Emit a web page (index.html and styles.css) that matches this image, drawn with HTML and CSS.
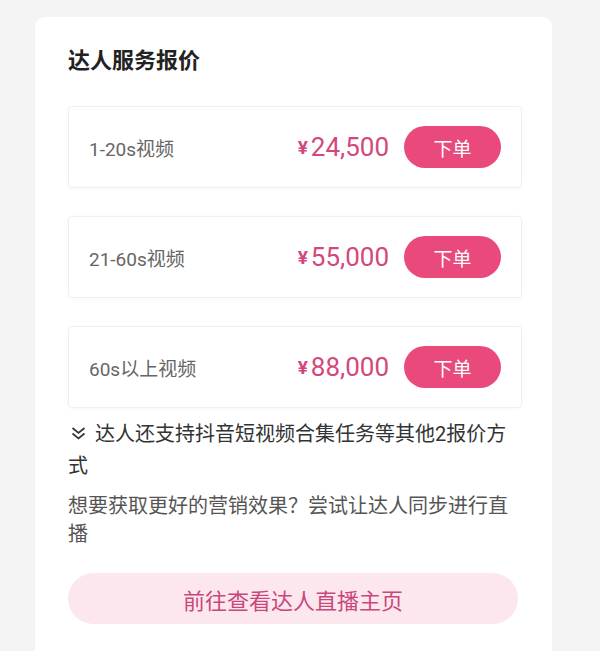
FILE: index.html
```html
<!DOCTYPE html>
<html lang="zh-CN">
    <head>
        <meta charset="UTF-8" />
        <meta name="viewport" content="width=device-width, initial-scale=1.0" />
        <title>达人服务报价</title>
        <link rel="stylesheet" href="styles.css">
    </head>
    <body>
        <div class="card">
            <h2 class="card-title">达人服务报价</h2>

            <div class="price-list">
                <div class="price-row">
                    <span class="price-label">1-20s视频</span>
                    <span class="price"><span class="yen">¥</span>24,500</span>
                    <button class="order-btn">下单</button>
                </div>
                <div class="price-row">
                    <span class="price-label">21-60s视频</span>
                    <span class="price"><span class="yen">¥</span>55,000</span>
                    <button class="order-btn">下单</button>
                </div>
                <div class="price-row">
                    <span class="price-label">60s以上视频</span>
                    <span class="price"><span class="yen">¥</span>88,000</span>
                    <button class="order-btn">下单</button>
                </div>
            </div>

            <p class="more-tip">
                <svg class="chevron" width="15" height="13" viewBox="0 0 15 13">
                    <polyline points="1.5,1 7.5,6 13.5,1" />
                    <polyline points="1.5,6.5 7.5,11.5 13.5,6.5" />
                </svg>达人还支持抖音短视频合集任务等其他2报价方式
            </p>
            <p class="live-tip">想要获取更好的营销效果？尝试让达人同步进行直播</p>

            <button class="live-btn">前往查看达人直播主页</button>
        </div>
    </body>
</html>
```

FILE: styles.css
```css
* {
    box-sizing: border-box;
    font-family: Roboto, "Noto Sans CJK SC", sans-serif;
}
html,
body {
    height: 100%;
}
body {
    margin: 0;
    padding: 17px 0 0 35px;
    background: #f4f4f4;
    color: #333;
    overflow: hidden;
}
.card {
    width: 517px;
    height: 100%;
    background: #fff;
    border-radius: 10px 10px 0 0;
    padding: 29px 30px 0 33px;
}
.card-title {
    margin: 0;
    font-size: 22px;
    line-height: 30px;
    font-weight: bold;
    color: #222;
}
.price-list {
    margin-top: 30px;
    display: flex;
    flex-direction: column;
    gap: 28px;
}
.price-row {
    height: 82px;
    display: flex;
    align-items: center;
    padding: 0 20px 0 20px;
    border: 1px solid #efefef;
    border-radius: 4px;
    box-shadow: 0 1px 4px rgba(0, 0, 0, 0.03);
}
.price-label {
    flex: 1;
    font-size: 19px;
    color: #666;
}
.price {
    font-size: 26px;
    color: #d4477c;
}
.yen {
    font-size: 19px;
    font-weight: bold;
    margin-right: 3px;
    position: relative;
    top: -2px;
}
.order-btn {
    margin-left: 15px;
    width: 97px;
    height: 42px;
    border: none;
    border-radius: 21px;
    background: #e9497b;
    color: #fff;
    font-size: 19px;
}
.more-tip {
    margin: 10px 0 0;
    font-size: 20px;
    line-height: 32px;
    color: #333;
}
.chevron {
    margin: 0 9px 0 3px;
    vertical-align: 1px;
}
.chevron polyline {
    fill: none;
    stroke: #333;
    stroke-width: 1.7;
}
.live-tip {
    margin: 10px 0 0;
    font-size: 20px;
    line-height: 28px;
    color: #555;
}
.live-btn {
    display: block;
    margin-top: 25px;
    width: 450px;
    height: 51px;
    border: none;
    border-radius: 26px;
    background: #fde7ee;
    color: #c9477c;
    font-size: 22px;
}
```
